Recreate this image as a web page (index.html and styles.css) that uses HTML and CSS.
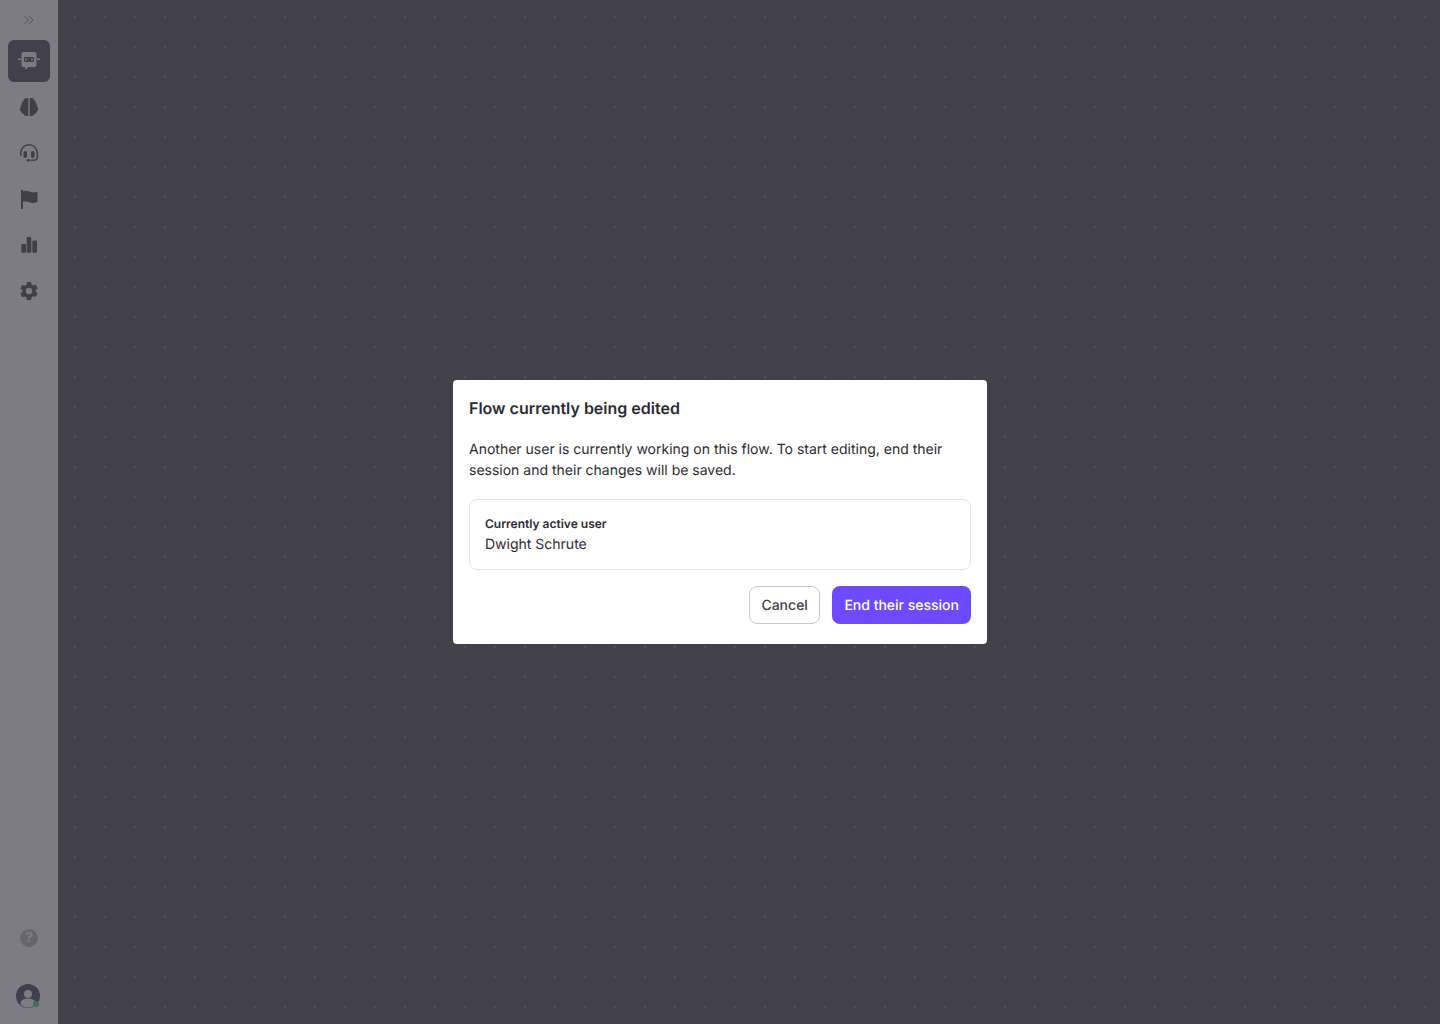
FILE: index.html
```html
<!DOCTYPE html>
<html lang="en">
<head>
    <meta charset="UTF-8"/>
    <title>Flow editor</title>
    <link rel="stylesheet" href="styles.css">
</head>
<body>
<div class="app">
    <nav class="sidebar">
        <button class="toggle" type="button">
            <svg width="12" height="12" viewBox="0 0 12 12" fill="none" stroke="currentColor" stroke-width="1">
                <path d="M1.500 2 5.500 6l-4 4M6 2l4 4-4 4"/>
            </svg>
        </button>
        <ul class="nav-list">
            <li class="nav-item active">
                <svg width="24" height="24" viewBox="0 0 24 24" fill="currentColor">
                    <path fill-rule="evenodd" d="M6.500 3h11a2 2 0 0 1 2 2v11a2 2 0 0 1-2 2h-6.300l-3 3v-3H6.500a2 2 0 0 1-2-2V5a2 2 0 0 1 2-2ZM8 8a1 1 0 0 0-1 1v3a1 1 0 0 0 1 1h8a1 1 0 0 0 1-1V9a1 1 0 0 0-1-1H8Z"/>
                    <rect x="1" y="9.500" width="3" height="1.500"/>
                    <rect x="20" y="9.500" width="3" height="1.500"/>
                    <circle cx="9" cy="10.500" r="1"/>
                    <circle cx="15" cy="10.500" r="1"/>
                </svg>
            </li>
            <li class="nav-item">
                <svg width="24" height="24" viewBox="0 0 24 24" fill="currentColor">
                    <path d="M11.300 3v18H9c-1.200 0-1.900-.8-2.200-1.900-1.500 0-2.500-1-2.500-2.500-.3-.1-.6-.4-.6-.4C2.700 15 2.500 14 3 13c.2-.5.500-.9.900-1.200-.4-.9-.2-1.800.6-2.300.1-.1.200-.2.300-.2C4.600 8 5.200 6.600 6.500 5.800 7 4 7.900 3 9.200 3h2.100Z"/>
                    <path d="M12.700 3v18H15c1.200 0 1.900-.8 2.200-1.900 1.500 0 2.500-1 2.500-2.500.3-.1.6-.4.6-.4.900-1.200 1.100-2.200.7-3.200-.2-.5-.5-.9-.9-1.200.4-.9.2-1.800-.6-2.300-.1-.1-.2-.2-.3-.2.2-1.300-.4-2.700-1.700-3.500C17 4 16.100 3 14.800 3h-2.100Z"/>
                </svg>
            </li>
            <li class="nav-item">
                <svg width="24" height="24" viewBox="0 0 24 24" fill="currentColor">
                    <path d="M12 3a9 9 0 0 0-9 9v3h1.500v-3a7.500 7.500 0 0 1 15 0v4a2.500 2.500 0 0 1-2.500 2.500h-3.500V20H17a4 4 0 0 0 4-4v-4a9 9 0 0 0-9-9Z"/>
                    <rect x="6.500" y="10" width="3.500" height="7" rx="1.700"/>
                    <rect x="14" y="10" width="3.500" height="7" rx="1.700"/>
                    <rect x="9.500" y="18" width="3.500" height="2.500" rx="1.200"/>
                </svg>
            </li>
            <li class="nav-item">
                <svg width="24" height="24" viewBox="0 0 24 24" fill="currentColor">
                    <path d="M4 3h2v19H4z"/>
                    <path d="M6 4.500c3-1.200 5-.5 7.500.5 2 .7 3.500.5 7-.5V15c-3.500 1.300-5.500 1.300-7.500.5-2.500-1-4.500-1.300-7-.5V4.500Z"/>
                </svg>
            </li>
            <li class="nav-item">
                <svg width="24" height="24" viewBox="0 0 24 24" fill="currentColor">
                    <rect x="4.300" y="11" width="4.700" height="8.700" rx="1.200"/>
                    <rect x="9.700" y="4" width="4.600" height="15.700" rx="1.200"/>
                    <rect x="15.300" y="7.600" width="4.700" height="12.100" rx="1.200"/>
                </svg>
            </li>
            <li class="nav-item">
                <svg width="24" height="24" viewBox="0 0 24 24" fill="currentColor">
                    <path fill-rule="evenodd" d="M10 3h4l.6 2.600 1.500.9 2.600-.8 2 3.500-2 1.800v1.800l2 1.800-2 3.500-2.600-.8-1.500.9L14 21h-4l-.6-2.600-1.500-.9-2.600.8-2-3.500 2-1.800v-1.800l-2-1.800 2-3.500 2.600.8 1.500-.9L10 3Zm2 5.800a3.200 3.200 0 1 0 0 6.400 3.200 3.200 0 0 0 0-6.400Z"/>
                </svg>
            </li>
        </ul>
        <div class="sidebar-bottom">
            <div class="help">?</div>
            <div class="divider"></div>
            <div class="avatar">
                <svg width="24" height="24" viewBox="0 0 24 24">
                    <circle cx="12" cy="12" r="12" fill="#62697a"/>
                    <circle cx="12" cy="10" r="4" fill="#ffffff"/>
                    <ellipse cx="12" cy="19" rx="7.500" ry="4.500" fill="#ffffff"/>
                </svg>
                <span class="status-dot"></span>
            </div>
        </div>
    </nav>
    <main class="canvas"></main>
</div>

<div class="overlay"></div>

<div class="modal">
    <h2 class="modal-title">Flow currently being edited</h2>
    <p class="modal-text">Another user is currently working on this flow. To start editing, end their session and their changes will be saved.</p>
    <div class="user-box">
        <div class="user-label">Currently active user</div>
        <div class="user-name">Dwight Schrute</div>
    </div>
    <div class="modal-actions">
        <button class="btn btn-secondary" type="button">Cancel</button>
        <button class="btn btn-primary" type="button">End their session</button>
    </div>
</div>
</body>
</html>
```

FILE: styles.css
```css
* {
    box-sizing: border-box;
}

html, body {
    height: 100%;
}

body {
    margin: 0;
    font-family: Inter, 'Liberation Sans', sans-serif;
    color: #2b2b33;
    text-rendering: geometricPrecision;
    overflow: hidden;
}

.app {
    display: flex;
    height: 100vh;
}

.sidebar {
    width: 58px;
    flex-shrink: 0;
    display: flex;
    flex-direction: column;
    align-items: center;
    background-color: white;
    color: #686770;
}

.toggle {
    width: 42px;
    height: 40px;
    padding: 0;
    border: none;
    background: none;
    color: #a4a4aa;
    display: flex;
    align-items: center;
    justify-content: center;
}

.nav-list {
    list-style: none;
    margin: 0;
    padding: 0;
    display: flex;
    flex-direction: column;
    gap: 4px;
}

.nav-item {
    width: 42px;
    height: 42px;
    border-radius: 6px;
    display: flex;
    align-items: center;
    justify-content: center;
}

.nav-item.active {
    background-color: #6b6a75;
    color: white;
}

.sidebar-bottom {
    margin-top: auto;
    display: flex;
    flex-direction: column;
    align-items: center;
}

.help {
    width: 18px;
    height: 18px;
    border-radius: 50%;
    background-color: #c6c6ca;
    color: white;
    font-size: 14px;
    font-weight: 800;
    line-height: 18px;
    text-align: center;
    margin-bottom: 19px;
}

.divider {
    width: 42px;
    height: 1px;
    background-color: #f9f9fa;
    margin-bottom: 17px;
}

.avatar {
    position: relative;
    width: 24px;
    height: 24px;
    margin-bottom: 16px;
    margin-right: 2px;
}

.avatar svg {
    display: block;
}

.status-dot {
    position: absolute;
    right: 1px;
    bottom: 1px;
    width: 6px;
    height: 6px;
    border-radius: 50%;
    background-color: #3cf587;
}

.canvas {
    flex: 1;
    background-color: #6b6a75;
    background-image: radial-gradient(circle, #8e8d97 1.5px, transparent 1.6px);
    background-size: 30px 30px;
    background-position: 2px 2px;
}

.overlay {
    position: fixed;
    inset: 0;
    background-color: rgba(39, 36, 46, 0.6);
}

.modal {
    position: fixed;
    top: 380px;
    left: 453px;
    width: 534px;
    height: 264px;
    padding: 16px;
    background-color: white;
    border-radius: 4px;
}

.modal-title {
    margin: 0 0 19px;
    font-size: 16px;
    line-height: 24px;
    font-weight: 600;
}

.modal-text {
    margin: 0 0 18px;
    font-size: 14px;
    line-height: 21px;
}

.user-box {
    height: 71px;
    padding: 15px;
    border: 1px solid #e5e5e8;
    border-radius: 8px;
    margin-bottom: 16px;
}

.user-label {
    font-size: 12px;
    line-height: 18px;
    font-weight: 600;
}

.user-name {
    margin-top: 1px;
    font-size: 14px;
    line-height: 21px;
}

.modal-actions {
    display: flex;
    justify-content: flex-end;
    gap: 12px;
}

.btn {
    height: 38px;
    padding: 0 11.5px;
    border-radius: 8px;
    font-family: inherit;
    font-size: 14px;
    font-weight: 500;
    text-rendering: inherit;
}

.btn-secondary {
    background-color: white;
    border: 1px solid #c9c9cd;
    color: #41404b;
}

.btn-primary {
    padding: 0 12px;
    background-color: #6d4aff;
    border: none;
    color: white;
}
```
